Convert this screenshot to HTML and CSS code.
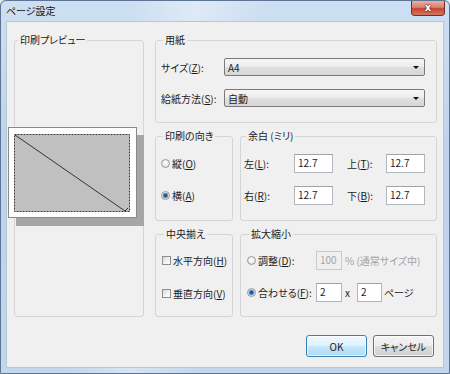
FILE: index.html
```html
<!DOCTYPE html>
<html lang="ja">
<head>
<meta charset="utf-8">
<title>ページ設定</title>
<link rel="stylesheet" href="styles.css">
</head>
<body>
<div class="window">
  <div class="titlebar">
    <span class="title">ページ設定</span>
    <div class="close">x</div>
  </div>
  <div class="client">
    <div class="main">
      <fieldset class="group preview">
        <legend>印刷プレビュー</legend>
        <svg class="paper-preview" width="137" height="100" viewBox="0 0 137 100">
          <rect x="8" y="8" width="128" height="91" fill="#a6a6a6"/>
          <rect x="0.5" y="0.5" width="128" height="90" fill="#ffffff" stroke="#8a8a8a"/>
          <rect x="6.5" y="7.5" width="115" height="77" fill="#c0c0c0" stroke="#3a3a3a" stroke-dasharray="2 1"/>
          <polyline points="7,8 117,84 120,81" fill="none" stroke="#333333" stroke-width="1"/>
        </svg>
      </fieldset>
      <div class="right">
        <fieldset class="group paper">
          <legend>用紙</legend>
          <div class="stack paper-rows">
            <div class="form-row">
              <label class="lbl">サイズ(<u>Z</u>):</label>
              <div class="combo"><span>A4</span><i class="arrow"></i></div>
            </div>
            <div class="form-row">
              <label class="lbl">給紙方法(<u>S</u>):</label>
              <div class="combo"><span>自動</span><i class="arrow"></i></div>
            </div>
          </div>
        </fieldset>
        <div class="pair">
          <fieldset class="group orient">
            <legend>印刷の向き</legend>
            <div class="stack orient-rows">
              <label class="opt"><input type="radio" name="orient" class="radio">縦(<u>O</u>)</label>
              <label class="opt"><input type="radio" name="orient" class="radio" checked>横(<u>A</u>)</label>
            </div>
          </fieldset>
          <fieldset class="group margins">
            <legend>余白 (ミリ)</legend>
            <div class="margin-grid">
              <label>左(<u>L</u>):</label><input class="tb" type="text" value="12.7"><span></span><label>上(<u>T</u>):</label><input class="tb" type="text" value="12.7">
              <label>右(<u>R</u>):</label><input class="tb" type="text" value="12.7"><span></span><label>下(<u>B</u>):</label><input class="tb" type="text" value="12.7">
            </div>
          </fieldset>
        </div>
        <div class="pair">
          <fieldset class="group center">
            <legend>中央揃え</legend>
            <div class="stack center-rows">
              <label class="opt"><input type="checkbox" class="check">水平方向(<u>H</u>)</label>
              <label class="opt"><input type="checkbox" class="check">垂直方向(<u>V</u>)</label>
            </div>
          </fieldset>
          <fieldset class="group scale">
            <legend>拡大縮小</legend>
            <div class="stack scale-rows">
              <div class="scale-row">
                <label class="opt wide"><input type="radio" name="scale" class="radio">調整(<u>D</u>):</label>
                <input class="tb small" type="text" value="100" disabled>
                <span class="muted note">% (通常サイズ中)</span>
              </div>
              <div class="scale-row">
                <label class="opt wide"><input type="radio" name="scale" class="radio" checked>合わせる(<u>F</u>):</label>
                <input class="tb small" type="text" value="2">
                <span class="times">x</span>
                <input class="tb small2" type="text" value="2">
                <span class="pages">ページ</span>
              </div>
            </div>
          </fieldset>
        </div>
      </div>
    </div>
    <div class="buttons">
      <button class="btn default">OK</button>
      <button class="btn">キャンセル</button>
    </div>
  </div>
</div>
</body>
</html>
```

FILE: styles.css
```css
* { box-sizing: border-box; }
html, body { margin: 0; padding: 0; }
body {
  width: 450px;
  height: 374px;
  overflow: hidden;
  background: #dfe7f0;
  font-family: "Noto Sans CJK JP", "Noto Sans", sans-serif;
  font-size: 10px;
  color: #1b1b1b;
  font-feature-settings: "palt";
}
.window {
  width: 450px;
  height: 374px;
  border: 1px solid #5d7593;
  border-radius: 6px 6px 0 0;
  background:
    linear-gradient(100deg, rgba(255,255,255,0) 25%, rgba(255,255,255,.35) 38%, rgba(255,255,255,0) 52%),
    linear-gradient(180deg, #cddff2 0%, #bed3ea 40%, #c2d6ec 100%);
  padding: 0 5px 5px;
  display: flex;
  flex-direction: column;
}
.titlebar {
  height: 20px;
  display: flex;
  align-items: flex-start;
  flex: none;
}
.title {
  line-height: 20px;
  font-size: 10px;
  color: #111;
}
.close {
  margin-left: auto;
  margin-right: -1px;
  width: 34px;
  height: 15px;
  border: 1px solid #7d2b22;
  border-top: none;
  border-radius: 0 0 4px 4px;
  background: linear-gradient(180deg, #eab0a2 0%, #d8816d 45%, #c5452f 55%, #d6775f 100%);
  color: #fff;
  font-family: "DejaVu Sans", sans-serif;
  font-weight: bold;
  font-size: 10px;
  line-height: 13px;
  text-align: center;
  text-shadow: 0 0 2px #5a150e, 0 0 1px #5a150e;
}
.client {
  flex: 1;
  border: 1px solid #b7c7d9;
  background: #f0f0f0;
  padding: 12px 6px 0 7px;
  display: flex;
  flex-direction: column;
}
.main {
  display: grid;
  grid-template-columns: 130px 282px;
  column-gap: 11px;
  height: 283px;
}
.right {
  display: flex;
  flex-direction: column;
  gap: 7px;
}
.pair {
  display: flex;
  gap: 7px;
}
.group {
  margin: 0;
  padding: 0;
  min-width: 0;
  border: 1px solid #d5d5d5;
  border-radius: 3px;
}
.group > legend {
  padding: 0 2px;
  margin-left: 2px;
  line-height: 12px;
  color: #1b1b1b;
}
.group.preview { height: 283px; }
.group.preview > legend { margin-left: 3px; }
.paper-preview {
  display: block;
  margin: 81px 0 0 -7px;
  overflow: visible;
}
.group.paper { height: 89px; padding: 12px 11px 0 5px; }
.stack { display: flex; flex-direction: column; }
.paper-rows { gap: 13px; }
.form-row {
  display: flex;
  align-items: center;
  height: 18px;
}
.lbl { width: 63px; flex: none; }
.combo {
  flex: 1;
  height: 18px;
  border: 1px solid #7a7a7a;
  border-radius: 2px;
  background: linear-gradient(180deg, #f6f6f6 0%, #ececec 50%, #e0e0e0 51%, #d6d6d6 100%);
  display: flex;
  align-items: center;
  padding: 0 5px 0 3px;
}
.combo span { flex: 1; }
.arrow {
  width: 0;
  height: 0;
  border-left: 3px solid transparent;
  border-right: 3px solid transparent;
  border-top: 3px solid #111;
}
.group.orient { width: 78px; height: 91px; padding: 13px 0 0 5px; }
.orient-rows { gap: 16px; }
.opt {
  display: flex;
  align-items: center;
  height: 16px;
  white-space: nowrap;
}
.radio {
  appearance: none;
  -webkit-appearance: none;
  margin: 0 2px 0 0;
  width: 9px;
  height: 9px;
  border-radius: 50%;
  border: 1px solid #9a9a9a;
  background: radial-gradient(circle at 50% 40%, #ffffff 0, #ececec 50%, #d4d4d4 100%);
  flex: none;
}
.radio:checked {
  background:
    radial-gradient(circle at 50% 50%, #173e6e 0, #2b63a0 1.3px, #6fa9dc 2.6px, rgba(255,255,255,0) 3.2px),
    radial-gradient(circle at 50% 40%, #ffffff 0, #ececec 50%, #d4d4d4 100%);
}
.check {
  appearance: none;
  -webkit-appearance: none;
  margin: 0 2px 0 0;
  width: 9px;
  height: 9px;
  border: 1px solid #8e8f8f;
  background: linear-gradient(135deg, #d8d8d8 0%, #f4f4f4 60%, #ffffff 100%);
  flex: none;
}
.group.margins { width: 197px; height: 91px; padding: 12px 11px 0 3px; }
.margin-grid {
  display: grid;
  grid-template-columns: 50px 39px 14px 39px 39px;
  grid-auto-rows: 19px;
  row-gap: 13px;
  align-items: center;
}
.tb {
  width: 39px;
  height: 19px;
  margin: 0;
  border: 1px solid #b3b6bc;
  border-top-color: #a0a3a9;
  background: #ffffff;
  font: inherit;
  font-feature-settings: "palt";
  color: #1b1b1b;
  padding: 0 0 3px 3px;
  outline: none;
}
.tb:disabled {
  background: #f0f0f0;
  border-color: #c9cacc;
  color: #a3a3a3;
}
.tb.small { width: 26px; }
.tb.small2 { width: 25px; }
.group.center { width: 78px; height: 89px; padding: 12px 0 0 6px; }
.center-rows { gap: 17px; }
.group.scale { width: 197px; height: 89px; padding: 11px 0 0 6px; }
.scale-rows { gap: 13px; }
.scale-row {
  display: flex;
  align-items: center;
  height: 19px;
}
.opt.wide { width: 69px; flex: none; }
.muted { color: #a3a3a3; }
.note { margin-left: 3px; }
.times { margin-left: 3px; width: 12px; }
.pages { margin-left: 2px; }
.buttons {
  margin-top: 18px;
  display: flex;
  justify-content: flex-end;
  gap: 6px;
  padding-right: 3px;
}
.btn {
  width: 61px;
  height: 22px;
  margin: 0;
  padding: 0;
  border: 1px solid #707070;
  border-radius: 3px;
  background: linear-gradient(180deg, #f4f4f4 0%, #ececec 50%, #dddddd 51%, #d0d0d0 100%);
  font: inherit;
  font-feature-settings: "palt";
  color: #1b1b1b;
  box-shadow: inset 0 0 0 1px rgba(255,255,255,.7);
}
.btn.default {
  border-color: #3c7fb1;
  background: linear-gradient(180deg, #eef8fe 0%, #def1fc 50%, #c4e7fb 51%, #addbf4 100%);
}
```
